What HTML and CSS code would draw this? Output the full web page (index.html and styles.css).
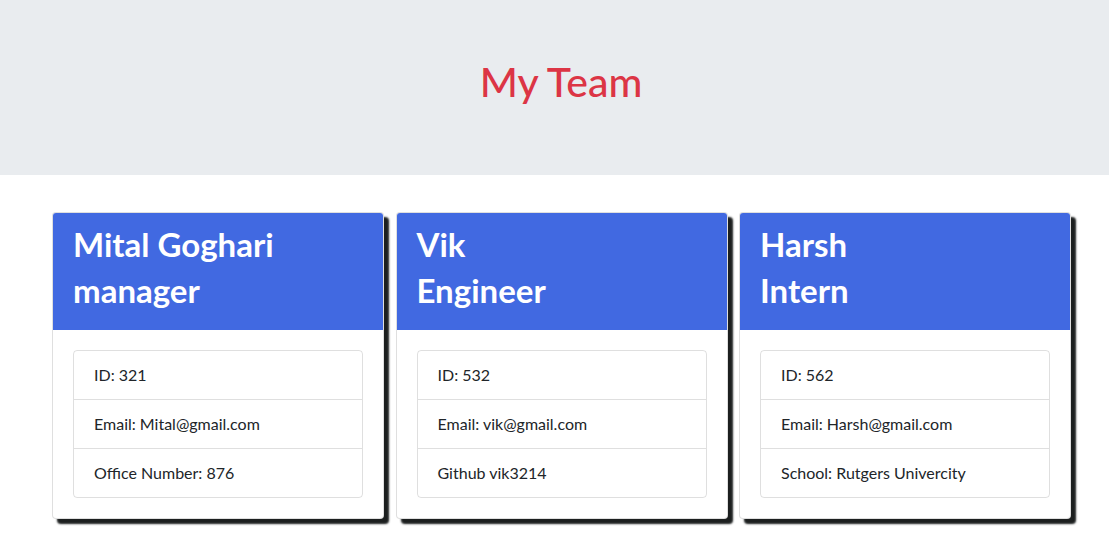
FILE: index.html
```html
<!DOCTYPE html>
<html lang="en">
<head>
<meta charset="utf-8">
<title>My Team</title>
<link rel="stylesheet" href="styles.css">
</head>
<body>
<header class="jumbotron">
  <h1 class="title">My Team</h1>
</header>
<main class="team">
  <div class="card">
    <div class="card-header">
      <h2 class="card-name">Mital Goghari</h2>
      <h2 class="card-role">manager</h2>
    </div>
    <div class="card-body">
      <ul class="list-group">
        <li class="list-item">ID: 321</li>
        <li class="list-item">Email: Mital@gmail.com</li>
        <li class="list-item">Office Number: 876</li>
      </ul>
    </div>
  </div>
  <div class="card">
    <div class="card-header">
      <h2 class="card-name">Vik</h2>
      <h2 class="card-role">Engineer</h2>
    </div>
    <div class="card-body">
      <ul class="list-group">
        <li class="list-item">ID: 532</li>
        <li class="list-item">Email: vik@gmail.com</li>
        <li class="list-item">Github vik3214</li>
      </ul>
    </div>
  </div>
  <div class="card">
    <div class="card-header">
      <h2 class="card-name">Harsh</h2>
      <h2 class="card-role">Intern</h2>
    </div>
    <div class="card-body">
      <ul class="list-group">
        <li class="list-item">ID: 562</li>
        <li class="list-item">Email: Harsh@gmail.com</li>
        <li class="list-item">School: Rutgers Univercity</li>
      </ul>
    </div>
  </div>
</main>
</body>
</html>
```

FILE: styles.css
```css
* { box-sizing: border-box; }

body {
  margin: 0;
  font-family: "Lato", "Noto Sans", sans-serif;
  font-size: 16px;
  line-height: 24px;
  color: #212529;
  background: #fff;
}

.jumbotron {
  height: 175px;
  background: #e9ecef;
  display: flex;
  align-items: center;
  justify-content: center;
  padding-left: 13px;
  margin-bottom: 37px;
}

.title {
  margin: 0 0 12px;
  font-size: 41px;
  line-height: 48px;
  font-weight: 500;
  color: #dc3545;
}

.team {
  display: flex;
  gap: 11.5px;
  width: 1019px;
  margin-left: 52px;
  padding-bottom: 30px;
}

.card {
  flex: 1 1 0;
  border: 1px solid rgba(0,0,0,.125);
  border-radius: 4px;
  background: #fff;
  box-shadow: 5px 5px 2px #1c1f1f;
}

.card-header {
  background: #4169e1;
  color: #fff;
  padding: 12px 20px;
  border-radius: 3px 3px 0 0;
}

.card-name,
.card-role {
  margin: 0 0 8px;
  font-size: 33px;
  line-height: 38.4px;
  font-weight: 700;
}

.card-body {
  padding: 20px;
}

.list-group {
  list-style: none;
  margin: 0;
  padding: 0;
  border: 1px solid rgba(0,0,0,.125);
  border-radius: 4px;
}

.list-item {
  padding: 12px 20px;
  border-top: 1px solid rgba(0,0,0,.125);
}

.list-item:first-child {
  border-top: 0;
}
```
